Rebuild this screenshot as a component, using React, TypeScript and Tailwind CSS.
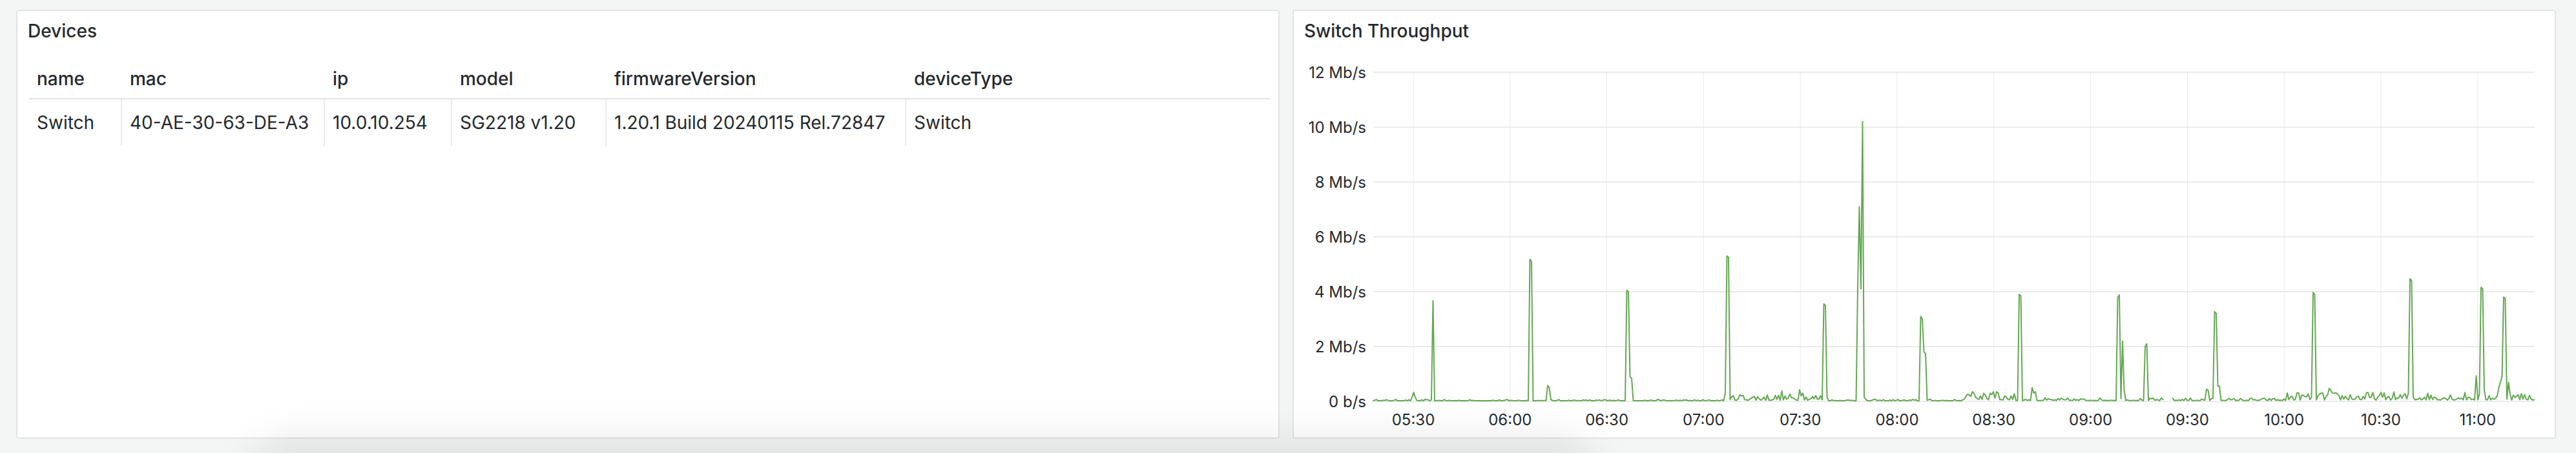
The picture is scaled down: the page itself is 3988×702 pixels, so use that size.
import React from "react";

const X0 = 2126;
const X1 = 3924;
const STEP = 2.5;
const OX = 2003; // svg origin x in page coords
const Y0 = 543; // zero line in svg coords
const PER = 42.5; // px per Mb/s

function makeRng(seed: number) {
  let s = seed;
  return () => {
    s = (s * 16807) % 2147483647;
    return (s - 1) / 2147483646;
  };
}

type Spike = [number, number[]];
const spikes: Spike[] = [
  [2185, [0.15, 0.33, 0.15]],
  [2218, [3.67]],
  [2368, [5.18, 5.1]],
  [2397, [0.58, 0.5]],
  [2518, [4.05, 4.0, 0.9, 0.85]],
  [2670, [0.3, 5.3, 5.25]],
  [2697, [0.2]],
  [2758, [0.38]],
  [2785, [0.42, 0.2, 0.3]],
  [2823, [3.55, 3.5]],
  [2875, [4.15, 7.1, 4.1, 10.2, 0.15]],
  [2973, [3.1, 3.0, 1.8, 1.75]],
  [3054, [0.35, 0.3]],
  [3067, [0.2]],
  [3080, [0.3, 0.25, 0.35]],
  [3090, [0.35, 0.3]],
  [3113, [0.2]],
  [3127, [3.9, 3.85]],
  [3146, [0.5, 0.3, 0.35]],
  [3278, [3.8, 3.88, 0.1, 2.2, 0.4]],
  [3320, [2.0, 2.1]],
  [3417, [0.45, 0.4]],
  [3428, [3.27, 3.2, 0.55, 0.55]],
  [3581, [3.97, 3.9]],
  [3606, [0.47, 0.4, 0.3]],
  [3731, [4.47, 4.4]],
  [3833, [0.93]],
  [3840, [4.16, 4.1, 0.4]],
  [3868, [0.5, 0.7, 0.9]],
  [3876, [3.8, 3.75]],
  [3883, [0.7]],
];

function baseValue(x: number, r: number) {
  if (x < 2680) return 0.02 + 0.05 * r * r * r;
  if (x < 2830) return 0.04 + 0.25 * r * r;
  if (x < 3040) return 0.02 + 0.06 * r * r * r;
  if (x < 3120) return 0.05 + 0.25 * r * r;
  if (x < 3540) return 0.03 + 0.1 * r * r * r;
  return 0.05 + 0.3 * r * r;
}

function buildPath() {
  const rnd = makeRng(12345);
  const n = Math.round((X1 - X0) / STEP);
  const vals: (number | null)[] = [];
  for (let i = 0; i <= n; i++) {
    const x = X0 + i * STEP;
    vals.push(baseValue(x, rnd()));
  }
  for (const [sx, vs] of spikes) {
    const start = Math.round((sx - X0) / STEP);
    vs.forEach((v, k) => {
      const idx = start + k;
      if (idx >= 0 && idx <= n) vals[idx] = v;
    });
  }
  for (let i = 0; i <= n; i++) {
    const x = X0 + i * STEP;
    if (x > 3349 && x < 3363) vals[i] = null;
  }
  let d = "";
  let pen = false;
  vals.forEach((v, i) => {
    if (v === null) {
      pen = false;
      return;
    }
    const x = (X0 + i * STEP - OX).toFixed(1);
    const y = (Y0 - v * PER).toFixed(1);
    d += `${pen ? "L" : "M"}${x} ${y} `;
    pen = true;
  });
  return d;
}

const yTicks = [
  { v: 12, label: "12 Mb/s" },
  { v: 10, label: "10 Mb/s" },
  { v: 8, label: "8 Mb/s" },
  { v: 6, label: "6 Mb/s" },
  { v: 4, label: "4 Mb/s" },
  { v: 2, label: "2 Mb/s" },
  { v: 0, label: "0 b/s" },
];

const xTicks = [
  "05:30",
  "06:00",
  "06:30",
  "07:00",
  "07:30",
  "08:00",
  "08:30",
  "09:00",
  "09:30",
  "10:00",
  "10:30",
  "11:00",
];

function Chart() {
  const d = buildPath();
  const left = X0 - OX;
  const right = X1 - OX;
  return (
    <svg width={1952} height={599} className="block" fill="none">
      {xTicks.map((_, k) => {
        const x = 185 + k * 149.8;
        return (
          <line
            key={"v" + k}
            x1={x}
            x2={x}
            y1={33}
            y2={551}
            stroke="#e9eaea"
            strokeWidth={1}
          />
        );
      })}
      {yTicks.map((t) => {
        const y = Y0 - t.v * PER;
        return (
          <g key={t.label}>
            <line
              x1={left}
              x2={right}
              y1={y}
              y2={y}
              stroke="#e3e4e4"
              strokeWidth={1.5}
            />
            <text
              x={112}
              y={y}
              textAnchor="end"
              dominantBaseline="central"
              fontSize={24}
              fill="#24292e"
            >
              {t.label}
            </text>
          </g>
        );
      })}
      {xTicks.map((t, k) => (
        <text
          key={t}
          x={185 + k * 149.8}
          y={571}
          textAnchor="middle"
          dominantBaseline="central"
          fontSize={24}
          fill="#24292e"
        >
          {t}
        </text>
      ))}
      <path
        d={d}
        stroke="#64a852"
        strokeWidth={2}
        strokeLinejoin="round"
        strokeLinecap="round"
      />
    </svg>
  );
}

const cols = [
  "name",
  "mac",
  "ip",
  "model",
  "firmwareVersion",
  "deviceType",
];
const row = [
  "Switch",
  "40-AE-30-63-DE-A3",
  "10.0.10.254",
  "SG2218 v1.20",
  "1.20.1 Build 20240115 Rel.72847",
  "Switch",
];

export default function App() {
  return (
    <div className="relative h-[702px] w-[3988px] overflow-hidden bg-[#f4f5f5] font-['Inter',sans-serif] text-[#24292e]">
      <div className="flex gap-[20px] pl-[25px] pt-[15px]">
        <section className="flex h-[665px] w-[1956px] flex-col rounded-[4px] border-2 border-[#e2e3e3] bg-white">
          <header className="flex h-[62px] items-center px-[16px] text-[28px] font-medium leading-none">
            Devices
          </header>
          <div className="ml-[18px] w-[1921px] text-[28px] leading-none">
            <div className="grid h-[75px] grid-cols-[144px_314px_197px_239px_464px_563px] items-center border-b-2 border-[#e3e4e4] pt-[12px] font-medium">
              {cols.map((c) => (
                <div key={c} className="pl-[12px]">
                  {c}
                </div>
              ))}
            </div>
            <div className="grid h-[72px] grid-cols-[144px_314px_197px_239px_464px_563px]">
              {row.map((c, i) => (
                <div
                  key={i}
                  className={
                    i < row.length - 1
                      ? "flex items-center whitespace-nowrap border-r-2 border-[#ececec] pl-[12px]"
                      : "flex items-center whitespace-nowrap pl-[12px]"
                  }
                >
                  {c}
                </div>
              ))}
            </div>
          </div>
        </section>
        <section className="flex h-[665px] w-[1956px] flex-col rounded-[4px] border-2 border-[#e2e3e3] bg-white">
          <header className="flex h-[62px] items-center px-[16px] text-[28px] font-medium leading-none">
            Switch Throughput
          </header>
          <Chart />
        </section>
      </div>
      <div className="pointer-events-none absolute left-[380px] top-[676px] h-[160px] w-[2100px] rounded-full bg-black/[0.08] blur-[30px]" />
    </div>
  );
}
